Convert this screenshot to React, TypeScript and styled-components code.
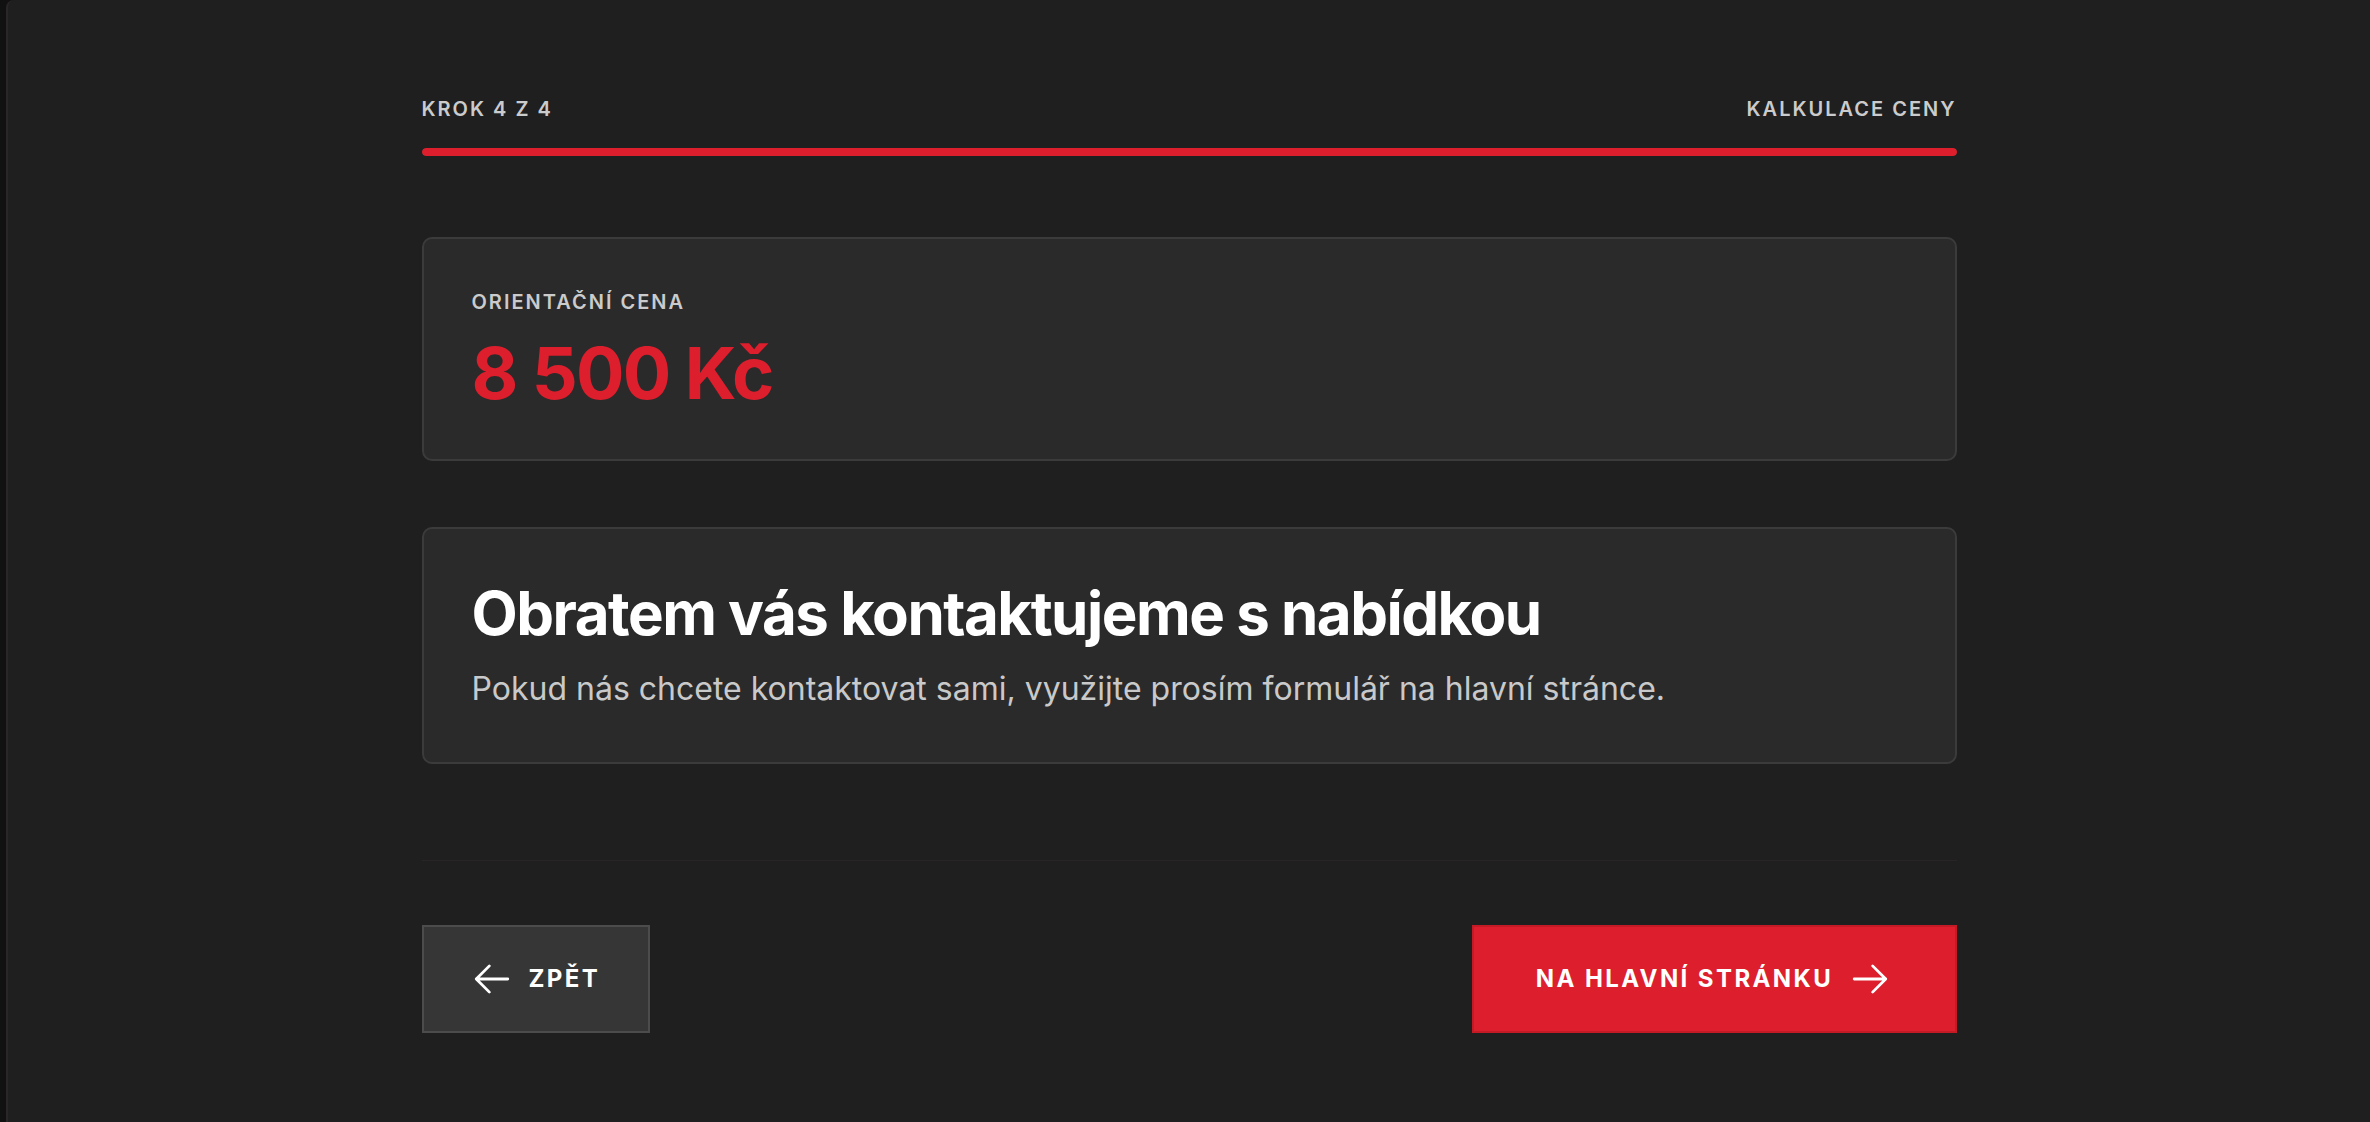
import styled, { createGlobalStyle } from 'styled-components'

const GlobalStyle = createGlobalStyle`
  * { box-sizing: border-box; }
  body {
    margin: 0;
    background: #111111;
    font-family: Inter, "Noto Sans", "Liberation Sans", sans-serif;
    -webkit-font-smoothing: antialiased;
  }
`

const Shell = styled.div`
  min-height: 100vh;
  padding-left: 6px;
  background: #111111;
`

const Panel = styled.main`
  min-height: 100vh;
  background: #1f1f1f;
  border-left: 2px solid #2c2727;
  border-top-left-radius: 8px;
  padding-top: 94px;
`

const Container = styled.div`
  max-width: 1535px;
  margin: 0 auto;
`

const StepRow = styled.div`
  display: flex;
  justify-content: space-between;
  align-items: center;
`

const StepLabel = styled.span`
  font-size: 20px;
  line-height: 30px;
  font-weight: 600;
  letter-spacing: 0.1em;
  text-transform: uppercase;
  color: #cbcbcb;
`

const Track = styled.div`
  margin-top: 24px;
  height: 8px;
  border-radius: 999px;
  background: #2e2e2e;
  overflow: hidden;
`

const Fill = styled.div`
  height: 100%;
  border-radius: 999px;
  background: #dd1e2c;
`

const Card = styled.section<{ $top: number }>`
  margin-top: ${p => p.$top}px;
  background: #2a2a2a;
  border: 2px solid #3b3b3b;
  border-radius: 10px;
  padding: 48px 48px 50px;
`

const CardLabel = styled.div`
  font-size: 20px;
  line-height: 30px;
  font-weight: 600;
  letter-spacing: 0.1em;
  text-transform: uppercase;
  color: #cbcbcb;
`

const Price = styled.div`
  margin-top: 20px;
  font-size: 72px;
  line-height: 1;
  font-weight: 700;
  letter-spacing: -0.025em;
  color: #dd1e2c;
`

const Heading = styled.h2`
  margin: 0;
  font-size: 60px;
  line-height: 72px;
  font-weight: 700;
  letter-spacing: -0.025em;
  color: #ffffff;
`

const Lead = styled.p`
  margin: 17px 0 0;
  font-size: 32px;
  line-height: 46px;
  color: #c9c9c9;
`

const Divider = styled.hr`
  margin: 96px 0 0;
  border: 0;
  height: 1px;
  background: #2a2525;
`

const Actions = styled.div`
  margin-top: 64px;
  display: flex;
  justify-content: space-between;
  align-items: center;
`

const Button = styled.button<{ $primary?: boolean }>`
  display: inline-flex;
  align-items: center;
  justify-content: center;
  gap: 16px;
  height: 108px;
  min-width: ${p => (p.$primary ? '485px' : '0')};
  padding: 0 48px 0 47px;
  border: 2px solid ${p => (p.$primary ? '#c41a26' : '#4c4c4c')};
  background: ${p => (p.$primary ? '#dd1e2c' : '#363636')};
  color: #ffffff;
  font-family: inherit;
  font-size: 24px;
  line-height: 36px;
  font-weight: 700;
  letter-spacing: 0.1em;
  text-transform: uppercase;
  cursor: pointer;
`

const Arrow = ({ dir }: { dir: 'left' | 'right' }) => (
  <svg width="42" height="42" viewBox="0 0 24 24" fill="none" stroke="currentColor" strokeWidth="1.6" strokeLinecap="round" strokeLinejoin="round">
    {dir === 'left' ? <path d="M10.5 19.5 3 12m0 0 7.5-7.5M3 12h18" /> : <path d="M13.5 4.5 21 12m0 0-7.5 7.5M21 12H3" />}
  </svg>
)

export default function App() {
  const step = 4
  const total = 4

  return (
    <Shell>
      <GlobalStyle />
      <Panel>
        <Container>
          <StepRow>
            <StepLabel>
              Krok {step} z {total}
            </StepLabel>
            <StepLabel>Kalkulace ceny</StepLabel>
          </StepRow>
          <Track>
            <Fill style={{ width: `${(step / total) * 100}%` }} />
          </Track>

          <Card $top={81}>
            <CardLabel>Orientační cena</CardLabel>
            <Price>8 500 Kč</Price>
          </Card>

          <Card $top={66}>
            <Heading>Obratem vás kontaktujeme s nabídkou</Heading>
            <Lead>Pokud nás chcete kontaktovat sami, využijte prosím formulář na hlavní stránce.</Lead>
          </Card>

          <Divider />

          <Actions>
            <Button type="button">
              <Arrow dir="left" />
              Zpět
            </Button>
            <Button type="button" $primary>
              Na hlavní stránku
              <Arrow dir="right" />
            </Button>
          </Actions>
        </Container>
      </Panel>
    </Shell>
  )
}
